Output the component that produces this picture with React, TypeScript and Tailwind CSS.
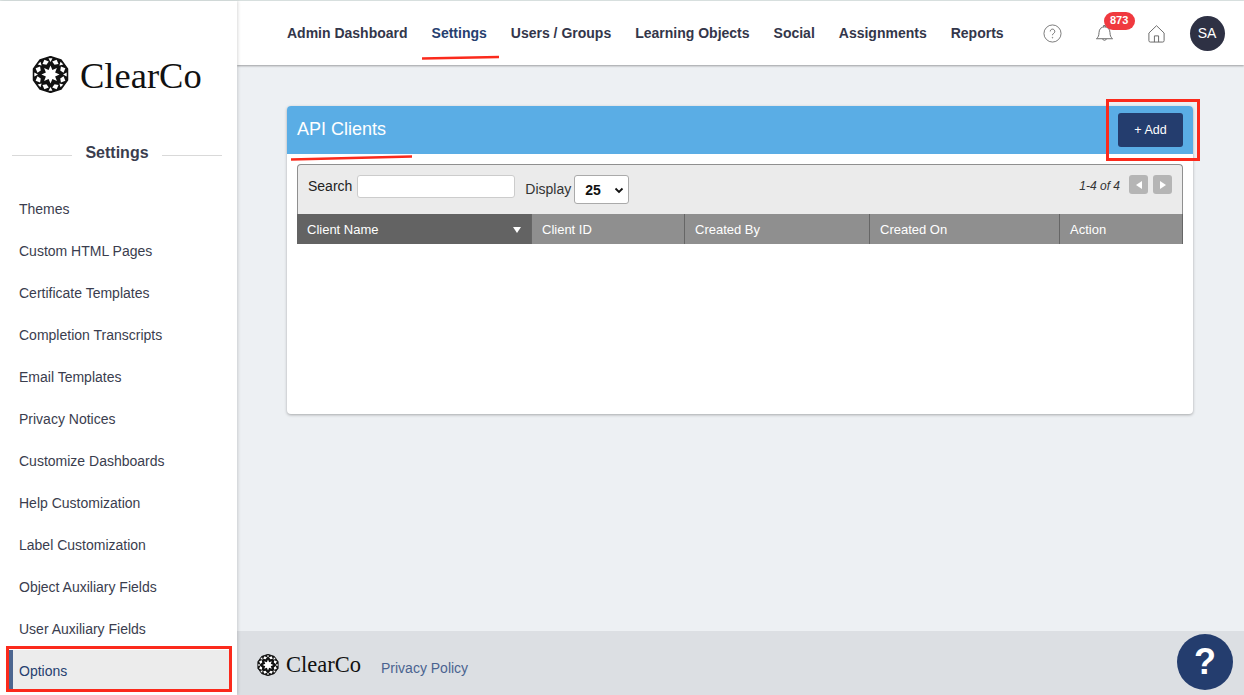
import React from 'react';

const sideItems = [
  'Themes',
  'Custom HTML Pages',
  'Certificate Templates',
  'Completion Transcripts',
  'Email Templates',
  'Privacy Notices',
  'Customize Dashboards',
  'Help Customization',
  'Label Customization',
  'Object Auxiliary Fields',
  'User Auxiliary Fields',
];

const navItems = ['Admin Dashboard', 'Settings', 'Users / Groups', 'Learning Objects', 'Social', 'Assignments', 'Reports'];

const columns = [
  { label: 'Client Name', width: 'w-[235px]', active: true },
  { label: 'Client ID', width: 'w-[153px]' },
  { label: 'Created By', width: 'w-[185px]' },
  { label: 'Created On', width: 'w-[190px]' },
  { label: 'Action', width: 'flex-1' },
];

const pt = (r: number, deg: number) => {
  const a = (deg * Math.PI) / 180;
  return `${(20 + r * Math.sin(a)).toFixed(2)},${(20 - r * Math.cos(a)).toFixed(2)}`;
};

// rosette mark: dark disc with a white star and a ring of white tiles
const Rosette = ({ className }: { className: string }) => {
  const star: string[] = [];
  for (let i = 0; i < 16; i++) star.push(pt(i % 2 === 0 ? 9.8 : 5.4, i * 22.5));
  return (
    <svg viewBox="0 0 40 40" className={className}>
      <polygon
        points={Array.from({ length: 10 }, (_, i) => pt(19.4, i * 36)).join(' ')}
        fill="#111"
        stroke="#111"
        strokeWidth="1.500"
        strokeLinejoin="round"
      />
      <polygon points={star.join(' ')} fill="#fff" />
      {Array.from({ length: 8 }, (_, i) => {
        const d = i * 45 + 22.5;
        return (
          <polygon key={i} points={[pt(11.4, d), pt(14.2, d - 15), pt(17.4, d), pt(14.2, d + 15)].join(' ')} fill="#fff" />
        );
      })}
      {Array.from({ length: 8 }, (_, i) => {
        const d = i * 45;
        return (
          <polygon key={i} points={[pt(13.6, d), pt(17.6, d - 7), pt(17.6, d + 7)].join(' ')} fill="#fff" />
        );
      })}
    </svg>
  );
};

export default function App() {
  return (
    <div className="relative flex h-screen w-full flex-col overflow-hidden bg-[#edf0f3] font-['Liberation_Sans',sans-serif] text-sm">
      <div className="h-px bg-[#dde5e4]" />
      <div className="flex min-h-0 flex-1">
        <aside className="z-10 flex w-[237px] shrink-0 flex-col bg-white shadow-[1px_0_3px_rgba(0,0,0,0.15)]">
          <div className="flex h-[131px] items-start gap-[11px] pl-[32px] pt-[55px]">
            <Rosette className="h-[37px] w-[37px]" />
            <span className="font-['Liberation_Serif',serif] text-[36.5px] leading-[40px] text-[#111]">ClearCo</span>
          </div>
          <div className="flex items-center pl-3 pr-[15px] pt-[10px]">
            <div className="mt-[4px] h-px flex-1 bg-[#d9d9d9]" />
            <span className="px-[13px] text-base font-bold leading-[22px] text-[#3a3d4e]">Settings</span>
            <div className="mt-[4px] h-px flex-1 bg-[#d9d9d9]" />
          </div>
          <nav className="flex flex-col pt-[24px]">
            {sideItems.map((item) => (
              <a key={item} className="flex h-[42px] items-center pl-[19px] text-[#3a3d4e]">
                {item}
              </a>
            ))}
            <a className="ml-[6px] mr-[8px] flex h-[41px] items-center border-l-[7px] border-[#4c6690] bg-[#ececec] pl-[6px] pt-[1px] text-[#26406f]">
              Options
            </a>
          </nav>
        </aside>

        <div className="flex min-w-0 flex-1 flex-col">
          <header className="flex h-[64px] shrink-0 items-center bg-white pl-[50px] shadow-[0_1px_2px_rgba(0,0,0,0.35)]">
            <nav className="flex gap-6">
              {navItems.map((item) => (
                <a key={item} className={`font-bold ${item === 'Settings' ? 'text-[#26406f]' : 'text-[#33364a]'}`}>
                  {item}
                </a>
              ))}
            </nav>
            <div className="ml-[39px] flex items-center">
              <svg viewBox="0 0 20 20" className="h-[19px] w-[19px]" fill="none" stroke="#666">
                <circle cx="10" cy="10" r="9" strokeWidth="0.9" />
                <path d="M7.600 7.800a2.400 2.400 0 1 1 3.600 2.100c-.8.5-1.200 1-1.200 1.900" strokeWidth="1" />
                <circle cx="10" cy="14.400" r="0.5" fill="#666" strokeWidth="0.4" />
              </svg>
              <div className="relative ml-[33px] h-[19px] w-[19px]">
                <svg viewBox="0 0 20 20" className="h-[19px] w-[19px]" fill="none" stroke="#666" strokeWidth="1">
                  <path d="M1.500 15.500c2-1.600 2.600-3.200 2.700-6.400C4.400 5.200 6.600 3 10 3s5.600 2.200 5.800 6.100c.1 3.200.7 4.800 2.700 6.400z" />
                  <path d="M8 15.700a2.100 2.100 0 0 0 4 0" />
                  <path d="M9 3V1.600h2V3" />
                </svg>
                <span className="absolute left-[9px] top-[-12px] flex h-[18px] w-[31px] items-center justify-center rounded-full bg-[#f0393f] text-[11px] font-bold text-white">
                  873
                </span>
              </div>
              <svg viewBox="0 0 20 20" className="ml-[33px] h-[19px] w-[19px]" fill="none" stroke="#666" strokeWidth="1">
                <path d="M2 9.500 10 1.800l8 7.700v8a1.500 1.500 0 0 1-1.500 1.500h-13A1.500 1.500 0 0 1 2 17.500z" />
                <path d="M7.800 19v-6.500h4.400V19" />
              </svg>
              <div className="ml-[24px] flex h-[35px] w-[35px] items-center justify-center rounded-full bg-[#2e3144] text-sm text-white">
                SA
              </div>
            </div>
          </header>

          <main className="min-h-0 flex-1 pl-[50px] pr-[51px] pt-[41px]">
            <section className="h-[308px] rounded-[4px] bg-white shadow-[0_1px_3px_rgba(0,0,0,0.3)]">
              <div className="flex h-[48px] items-center justify-between rounded-t-[4px] bg-[#5aade5] pl-[10px] pr-[10px]">
                <h2 className="pb-[2px] text-lg text-white">API Clients</h2>
                <button className="h-[34px] w-[65px] rounded-[3px] bg-[#243d6e] pt-[1px] text-[12.5px] text-white">+ Add</button>
              </div>
              <div className="px-[10px] pt-[10px]">
                <div className="flex h-[50px] items-start rounded-t-[4px] border border-b-0 border-[#8f8f8f] bg-[#ebebeb] pl-[10px] pr-[10px] pt-[10px]">
                  <span className="pt-[1px] text-sm text-[#222]">Search</span>
                  <input className="ml-[5px] h-[23px] w-[158px] rounded-[3px] border border-[#ccc] bg-white" />
                  <span className="ml-[10px] pt-[4px] text-sm text-[#333]">Display</span>
                  <div className="ml-[3px] flex h-[29px] w-[55px] items-center justify-between rounded-[3px] border border-[#aaa] bg-white pl-[10px] pr-[3px] font-bold text-[#111]">
                    <span className="text-sm">25</span>
                    <svg viewBox="0 0 12 12" className="h-3 w-3" fill="none" stroke="#111" strokeWidth="1.800">
                      <path d="M2.500 4.500 6 8l3.500-3.500" />
                    </svg>
                  </div>
                  <span className="ml-auto pt-[3px] text-xs italic text-[#333]">1-4 of 4</span>
                  <button className="ml-[9px] flex h-[19px] w-[19px] items-center justify-center rounded-[3px] bg-[#b5b5b5]">
                    <span className="h-0 w-0 border-y-[4px] border-r-[6px] border-y-transparent border-r-white" />
                  </button>
                  <button className="ml-[5px] flex h-[19px] w-[19px] items-center justify-center rounded-[3px] bg-[#b5b5b5]">
                    <span className="h-0 w-0 border-y-[4px] border-l-[6px] border-y-transparent border-l-white" />
                  </button>
                </div>
                <div className="flex h-[30px] border-r border-[#666] text-[#fff]">
                  {columns.map((col) => (
                    <div
                      key={col.label}
                      className={`flex items-center justify-between border-r border-[#666] pl-[10px] pr-[10px] pt-[2px] text-[13px] last:border-r-0 ${col.width} ${col.active ? 'bg-[#636363]' : 'bg-[#8f8f8f]'}`}
                    >
                      {col.label}
                      {col.active && <span className="h-0 w-0 border-x-[4px] border-t-[6px] border-x-transparent border-t-white" />}
                    </div>
                  ))}
                </div>
              </div>
            </section>
          </main>

          <footer className="flex h-[64px] shrink-0 items-center bg-[#dcdfe3] pl-[20px] pt-[4px]">
            <Rosette className="h-[22px] w-[22px]" />
            <span className="ml-[7px] font-['Liberation_Serif',serif] text-[22.5px] leading-none text-[#111]">ClearCo</span>
            <a className="ml-[20px] mt-[6px] text-sm text-[#4a6390]">Privacy Policy</a>
          </footer>
        </div>
      </div>

      {/* help bubble */}
      <button className="absolute bottom-[5px] right-[11px] z-20 flex h-[56px] w-[56px] items-center justify-center rounded-full bg-[#243d6e] text-[36px] font-bold text-white">
        ?
      </button>

      {/* red annotations from the original capture */}
      <div className="absolute left-[1106px] top-[99px] z-20 h-[62px] w-[94px] border-[3px] border-[#fb2a1c]" />
      <div className="absolute left-[6px] top-[646px] z-20 h-[46px] w-[226px] border-[3px] border-[#fb2a1c]" />
      <svg className="absolute left-0 top-0 z-20 h-[170px] w-full" fill="none" stroke="#fb2a1c" strokeWidth="2.500">
        <path d="M422 58.500 499 57" />
        <path d="M291 159.500 412 156.500" />
      </svg>
    </div>
  );
}
